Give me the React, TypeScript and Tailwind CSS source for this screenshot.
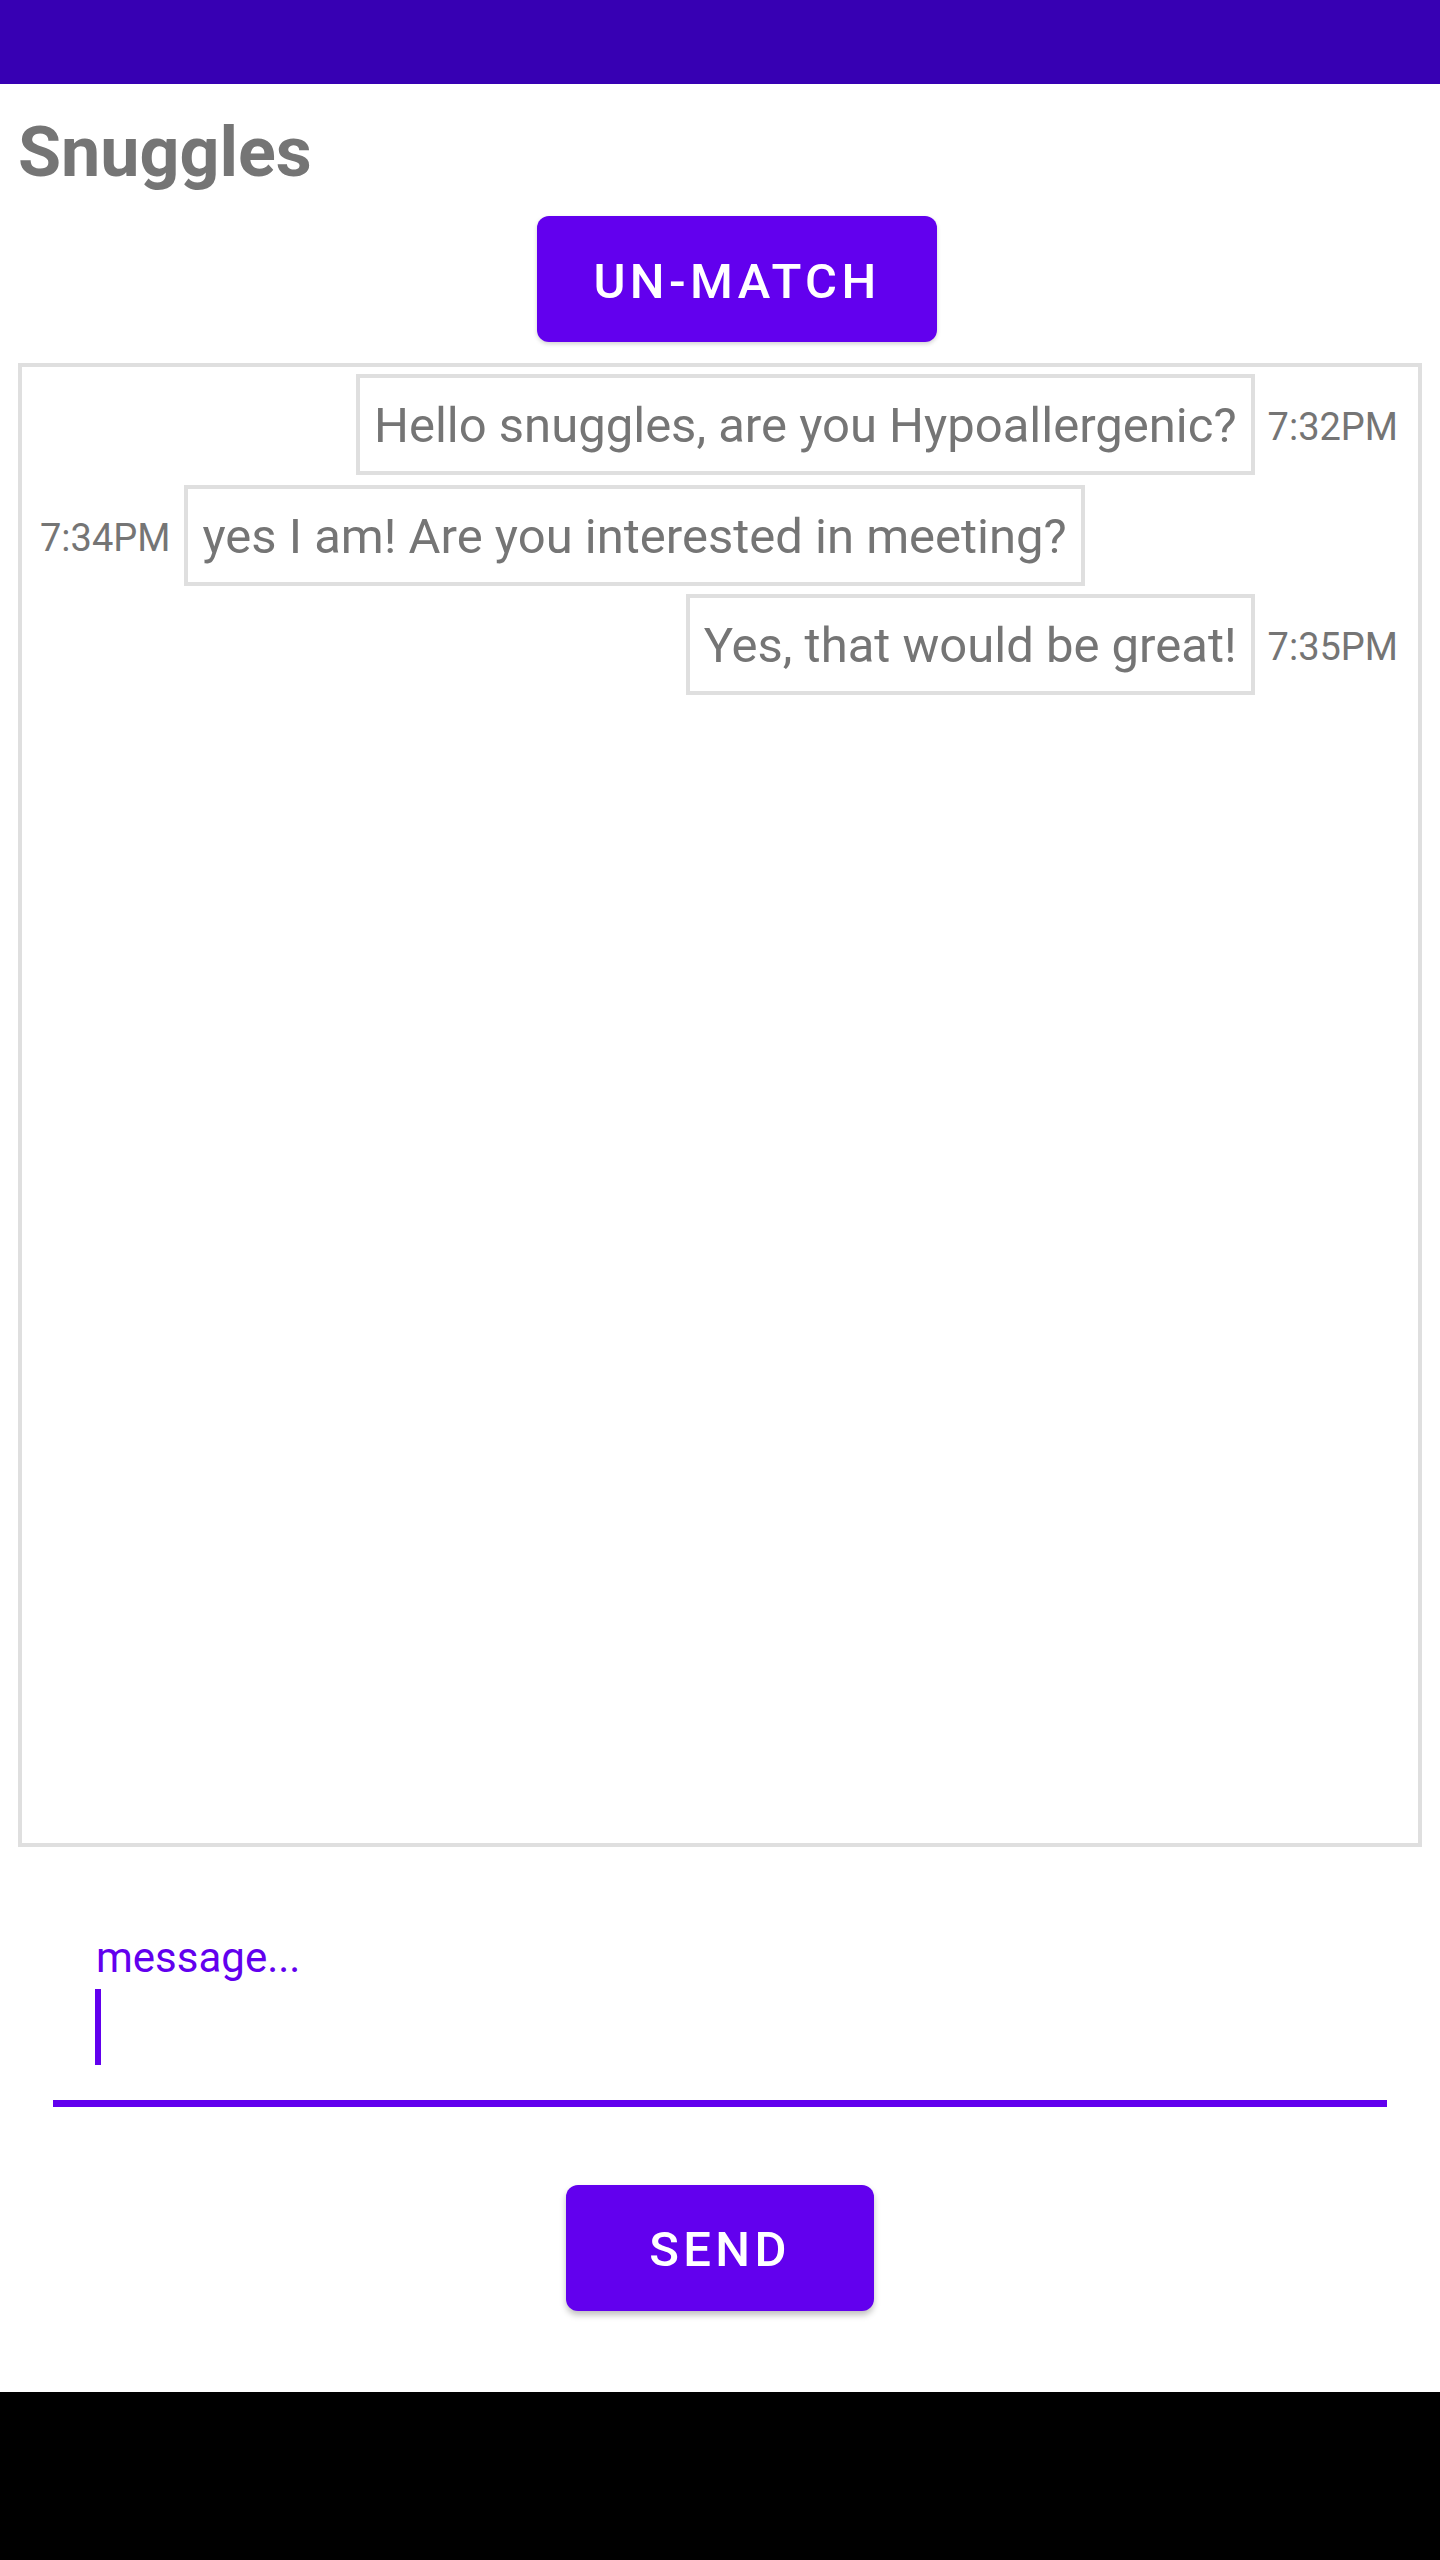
const messages = [
  { id: 1, text: "Hello snuggles, are you Hypoallergenic?", time: "7:32PM", mine: true },
  { id: 2, text: "yes I am! Are you interested in meeting?", time: "7:34PM", mine: false },
  { id: 3, text: "Yes, that would be great!", time: "7:35PM", mine: true },
];

function MessageRow({ text, time, mine }: { text: string; time: string; mine: boolean }) {
  const bubble = (
    <div className="border-4 border-[#dfdfdf] px-[14px] pt-[19px] pb-[17px] text-[49px] leading-[57px] text-[#757575] whitespace-nowrap">
      {text}
    </div>
  );
  const stamp = <span className="mt-[5px] text-[38px] leading-[45px] text-[#757575]">{time}</span>;

  return (
    <div
      className={
        mine
          ? "flex h-[110px] items-center justify-end gap-[13px] pr-[20px] pt-[7px] pb-[2px]"
          : "flex h-[110px] items-center justify-start gap-[14px] pl-[18px] pt-[8px] pb-[1px]"
      }
    >
      {mine ? (
        <>
          {bubble}
          {stamp}
        </>
      ) : (
        <>
          {stamp}
          {bubble}
        </>
      )}
    </div>
  );
}

export default function App() {
  return (
    <div className="flex h-[2560px] w-[1440px] flex-col bg-white font-['Roboto',sans-serif]">
      <div className="h-[84px] bg-[#3700B3]" />

      <h1 className="ml-[18px] mt-[27px] text-[70px] font-bold leading-[82px] text-[#757575]">Snuggles</h1>

      <div className="mt-[23px] flex justify-center pl-[34px]">
        <button className="h-[126px] w-[400px] rounded-[12px] bg-[#6200EE] pt-[5px] text-[49px] font-medium tracking-[0.0892em] text-white shadow-[0_2px_4px_rgba(0,0,0,0.18)]">
          UN-MATCH
        </button>
      </div>

      <div className="mx-[18px] mt-[21px] h-[1484px] border-4 border-[#dfdfdf]">
        {messages.map((m) => (
          <MessageRow key={m.id} text={m.text} time={m.time} mine={m.mine} />
        ))}
      </div>

      <div className="mx-[53px] mt-[86px]">
        <div className="pl-[43px] text-[42px] leading-[49px] text-[#6200EE]">message...</div>
        <div className="ml-[42px] mt-[7px] h-[76px] w-[6px] bg-[#6200EE]" />
        <div className="mt-[35px] h-[7px] bg-[#6200EE]" />
      </div>

      <div className="mt-[78px] flex justify-center">
        <button className="h-[126px] w-[308px] rounded-[12px] bg-[#6200EE] pt-[3px] text-[49px] font-medium tracking-[0.0892em] text-white shadow-[0_4px_6px_rgba(0,0,0,0.25)]">
          SEND
        </button>
      </div>

      <div className="mt-auto h-[168px] bg-black" />
    </div>
  );
}
